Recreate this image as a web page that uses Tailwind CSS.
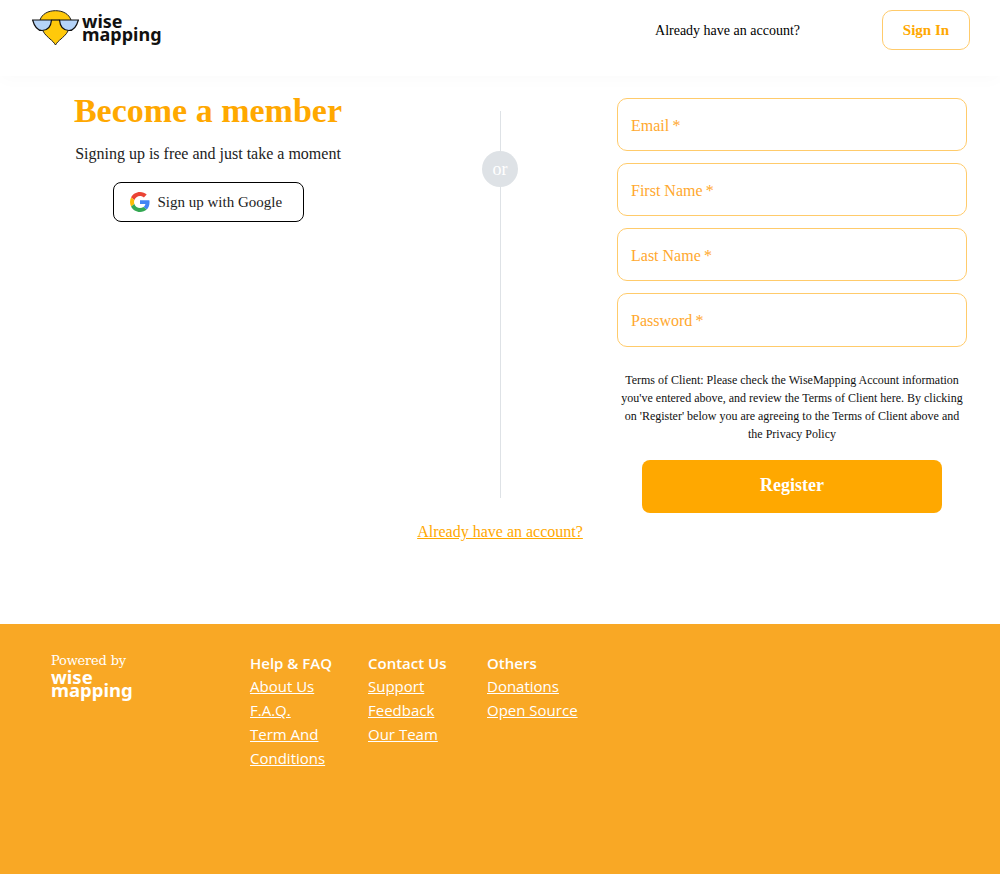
<!DOCTYPE html>
<html lang="en">
<head>
    <meta charset="UTF-8">
    <meta name="viewport" content="width=device-width, initial-scale=1.0">
    <title>WiseMapping - Sign up</title>
    <script src="https://cdn.jsdelivr.net/npm/@tailwindcss/browser@4"></script>
</head>
<body class="bg-white font-['Liberation_Serif',serif] h-[874px] overflow-hidden">

    <!-- header -->
    <header class="h-[76px] shadow-[0_4px_16px_rgba(0,0,0,0.02)]">
        <div class="h-[60px] flex items-center justify-between pl-[32px] pr-[30px]">
            <div class="flex items-start h-[60px] pt-[10px]">
                <svg width="47" height="36" viewBox="0 0 47 36">
                    <path d="M8 10C10 4 16 .7 23.500 .7S37 4 39 10L36 21c-2 4-5 6-7 8-2 1.500-4 3.500-5.500 6-1.500-2.500-3.500-4.500-5.500-6-2-2-5-4-7-8z" fill="#ffc90b" stroke="#222" stroke-width="1"/>
                    <path d="M.6 10H19.500c-.5 6-3.500 10.500-9.500 10.500C5 20.500 2 15 .6 10z" fill="#b5d3f7" stroke="#111" stroke-width="1.200"/>
                    <path d="M46.400 10H27.500c.5 6 3.500 10.500 9.500 10.500 5 0 8-5.500 9.400-10.500z" fill="#b5d3f7" stroke="#111" stroke-width="1.200"/>
                    <path d="M19.500 10h8" stroke="#111" stroke-width="1.200"/>
                </svg>
                <div class="ml-[3px] font-['Noto_Sans',sans-serif] font-bold text-[18px] leading-[13px] text-[#111] mt-[5px]">wise<br>mapping</div>
            </div>
            <div class="flex items-center">
                <span class="text-[14px] text-black mr-[82px]">Already have an account?</span>
                <a class="w-[88px] h-[40px] border border-[#ffcb6b] rounded-[10px] flex items-center justify-center text-[#ffa800] font-bold text-[15px]">Sign In</a>
            </div>
        </div>
    </header>

    <main class="flex h-[436px]">
        <!-- left -->
        <section class="w-[416px] flex flex-col items-center pt-[14px]">
            <h1 class="text-[#ffa800] font-bold text-[34px] leading-[42px]">Become a member</h1>
            <p class="text-[16px] text-[#222] mt-[11px] leading-[22px]">Signing up is free and just take a moment</p>
            <button class="mt-[17px] w-[191px] h-[40px] border border-black rounded-[8px] flex items-center pl-[16px] text-[15px] text-[#222]">
                <svg width="20" height="20" viewBox="0 0 48 48" class="mr-[8px]">
                    <path fill="#EA4335" d="M24 9.500c3.500 0 6.700 1.200 9.200 3.600l6.900-6.900C35.900 2.400 30.500 0 24 0 14.600 0 6.500 5.400 2.600 13.200l8 6.200C12.500 13.700 17.800 9.500 24 9.500z"/>
                    <path fill="#4285F4" d="M46.900 24.500c0-1.600-.1-3.100-.4-4.500H24v9h12.900c-.6 3-2.200 5.500-4.700 7.200l7.700 6c4.500-4.200 7-10.300 7-17.700z"/>
                    <path fill="#FBBC05" d="M10.500 28.600c-.5-1.500-.8-3-.8-4.600s.3-3.100.8-4.600l-8-6.200C.9 16.500 0 20.100 0 24s.9 7.500 2.600 10.800l7.900-6.200z"/>
                    <path fill="#34A853" d="M24 48c6.500 0 11.900-2.100 15.900-5.800l-7.700-6c-2.200 1.400-4.900 2.300-8.200 2.300-6.200 0-11.500-4.200-13.400-9.900l-8 6.200C6.500 42.600 14.600 48 24 48z"/>
                </svg>
                <span>Sign up with Google</span>
            </button>
        </section>

        <!-- divider -->
        <div class="w-[168px] relative">
            <div class="absolute left-[84px] top-[35px] w-px h-[387px] bg-[#dee2e6]"></div>
            <div class="absolute left-[66px] top-[75px] w-[36px] h-[36px] rounded-full bg-[#dee2e6] text-white text-[18px] flex items-center justify-center">or</div>
        </div>

        <!-- form -->
        <section class="ml-[33px] w-[350px] pt-[22px]">
            <div class="flex flex-col gap-[12px]">
                <div class="h-[53px] border border-[#ffcb6b] rounded-[10px] px-[13px] pt-[2px] flex items-center text-[16px] text-[#ffa82e]">Email&thinsp;*</div>
                <div class="h-[53px] border border-[#ffcb6b] rounded-[10px] px-[13px] pt-[2px] flex items-center text-[16px] text-[#ffa82e]">First Name&thinsp;*</div>
                <div class="h-[53px] border border-[#ffcb6b] rounded-[10px] px-[13px] pt-[2px] flex items-center text-[16px] text-[#ffa82e]">Last Name&thinsp;*</div>
                <div class="h-[54px] border border-[#ffcb6b] rounded-[10px] px-[13px] pt-[2px] flex items-center text-[16px] text-[#ffa82e]">Password&thinsp;*</div>
            </div>
            <p class="mt-[24px] text-[12px] leading-[18px] text-center text-[#111]">Terms of Client: Please check the WiseMapping Account information you've entered above, and review the Terms of Client here. By clicking on 'Register' below you are agreeing to the Terms of Client above and the Privacy Policy</p>
            <button class="block mx-auto mt-[17px] w-[300px] h-[53px] pb-[3px] rounded-[8px] bg-[#ffa800] text-white font-bold text-[18px]">Register</button>
        </section>
    </main>

    <div class="h-[112px] text-center pt-[8px]">
        <a class="text-[#ffa800] underline text-[16px] leading-[20px]">Already have an account?</a>
    </div>

    <!-- footer -->
    <footer class="h-[250px] bg-[#f9a825] text-white flex pl-[51px] pt-[28px] font-['Open_Sans',sans-serif] text-[15px] leading-[24px]">
        <div class="w-[199px]">
            <div class="font-['DejaVu_Serif',serif] text-[13px] leading-[16px] tracking-[-0.2px] mt-px">Powered by</div>
            <div class="font-['Noto_Sans',sans-serif] font-bold text-[18.500px] leading-[13px] mt-[1px]">wise<br>mapping</div>
        </div>
        <div class="w-[118px]">
            <div class="font-semibold leading-[22px]">Help &amp; FAQ</div>
            <a class="block underline">About Us</a>
            <a class="block underline">F.A.Q.</a>
            <a class="block underline w-[80px]">Term And Conditions</a>
        </div>
        <div class="w-[119px]">
            <div class="font-semibold leading-[22px]">Contact Us</div>
            <a class="block underline">Support</a>
            <a class="block underline">Feedback</a>
            <a class="block underline">Our Team</a>
        </div>
        <div>
            <div class="font-semibold leading-[22px]">Others</div>
            <a class="block underline">Donations</a>
            <a class="block underline">Open Source</a>
        </div>
    </footer>
</body>
</html>
